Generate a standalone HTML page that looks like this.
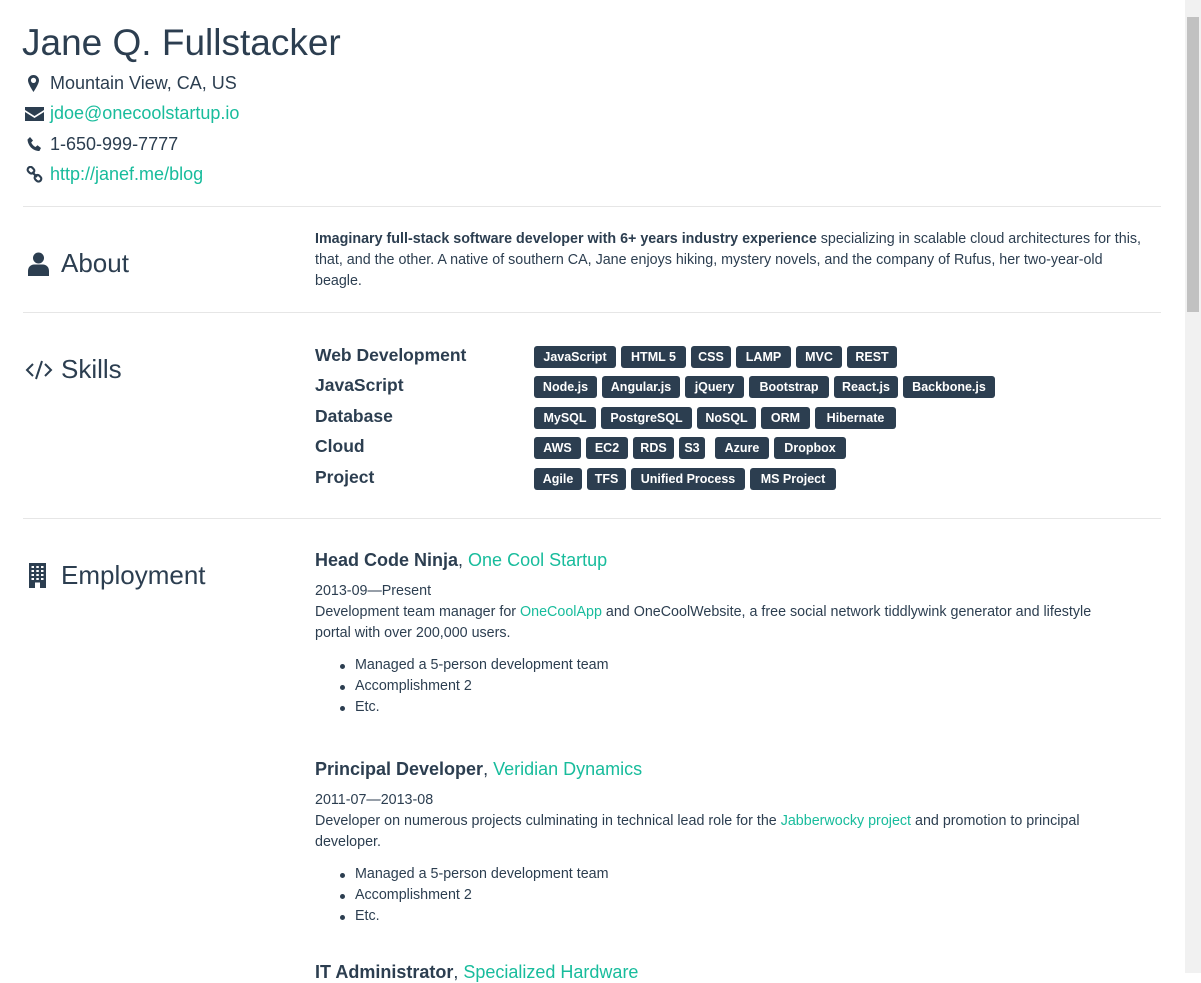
<!DOCTYPE html>
<html><head><meta charset="utf-8">
<style>
html,body{margin:0;padding:0;background:#fff;}
body{font-family:"Liberation Sans",sans-serif;color:#2c3e50;width:1201px;height:973px;overflow:hidden;position:relative;}
a{color:#18bc9c;text-decoration:none;}
.abs{position:absolute;white-space:nowrap;}
.sb{position:absolute;left:1185px;top:0;width:16px;height:973px;background:#f1f1f1;}
.sb .th{position:absolute;left:2px;top:17px;width:12px;height:295px;background:#c1c1c1;}
hr{position:absolute;left:23px;width:1138px;margin:0;border:0;border-top:1px solid #e6e6e6;}
.h1{font-size:37px;left:22px;top:22px;}
.ci{font-size:18px;left:50px;}
.ic{position:absolute;left:25px;}
.sh{font-size:26px;left:61px;}
.p{font-size:14.3px;line-height:21px;left:315px;width:830px;white-space:normal;}
.lab{font-size:17.5px;font-weight:bold;left:315px;}
.tags{position:absolute;left:534px;height:22px;font-size:0;white-space:nowrap;}
.t{display:inline-block;height:22px;line-height:22px;background:#2c3e50;color:#fff;font-size:12.5px;font-weight:bold;text-align:center;border-radius:3px;margin-right:5px;}
.jh{font-size:18px;left:315px;}
ul{margin:0;padding:0;list-style:none;}
li{position:relative;font-size:14.3px;line-height:21px;}
li:before{content:"";position:absolute;left:-15px;top:9px;width:5px;height:5px;border-radius:50%;background:#2c3e50;}
</style></head><body>
<div class="abs h1">Jane Q. Fullstacker</div>

<svg class="ic" style="top:75px;left:28px" width="11" height="17" viewBox="0 0 11 17"><path d="M5.5 0C2.5 0 0 2.4 0 5.4 0 9 5.5 17 5.5 17S11 9 11 5.4C11 2.4 8.5 0 5.5 0zm0 8a2.6 2.6 0 1 1 0-5.2 2.6 2.6 0 0 1 0 5.2z" fill="#2c3e50"/></svg>
<div class="abs ci" style="top:73px">Mountain View, CA, US</div>

<svg class="ic" style="top:107px" width="19" height="14" viewBox="0 0 19 14"><path d="M0 0h19v3l-9.5 6L0 3z M0 5l9.5 6 9.5-6v9H0z" fill="#2c3e50"/></svg>
<div class="abs ci" style="top:103px"><a>jdoe@onecoolstartup.io</a></div>

<svg class="ic" style="top:137px;left:27px" width="15" height="15" viewBox="0 0 15 15"><path d="M3 0l3 3.5-1.8 2c.8 2 2.4 3.6 4.3 4.5l2-1.8L14 11l-1.6 3C6 14 1 9 0.5 2.5z" fill="#2c3e50"/></svg>
<div class="abs ci" style="top:134px">1-650-999-7777</div>

<svg class="ic" style="top:166px;left:26px" width="17" height="17" viewBox="0 0 17 17"><g fill="none" stroke="#2c3e50" stroke-width="2.2"><rect x="1.5" y="1.5" width="7" height="5.5" rx="2.7" transform="rotate(45 5 4.2)"/><rect x="8.5" y="9.5" width="7" height="5.5" rx="2.7" transform="rotate(45 12 12.2)"/><path d="M6 6l5 5"/></g></svg>
<div class="abs ci" style="top:164px"><a>http://janef.me/blog</a></div>

<hr style="top:206px">

<svg class="ic" style="top:252px;left:28px" width="21" height="24" viewBox="0 0 21 24"><circle cx="10.5" cy="6" r="5.5" fill="#2c3e50"/><path d="M0 24v-5c0-4 3-6.5 6-6.5h9c3 0 6 2.5 6 6.5v5z" fill="#2c3e50"/></svg>
<div class="abs sh" style="top:248px">About</div>
<div class="abs p" style="top:229px"><b>Imaginary full-stack software developer with 6+ years industry experience</b> specializing in scalable cloud architectures for this, that, and the other. A native of southern CA, Jane enjoys hiking, mystery novels, and the company of Rufus, her two-year-old beagle.</div>

<hr style="top:312px">

<svg class="ic" style="top:359px" width="28" height="22" viewBox="0 0 28 22"><g fill="none" stroke="#2c3e50" stroke-width="2"><path d="M8 5l-6 6 6 6M20 5l6 6-6 6M17 2l-6 18"/></g></svg>
<div class="abs sh" style="top:354px">Skills</div>

<div class="abs lab" style="top:345px">Web Development</div>
<div class="abs lab" style="top:375px">JavaScript</div>
<div class="abs lab" style="top:406px">Database</div>
<div class="abs lab" style="top:436px">Cloud</div>
<div class="abs lab" style="top:467px">Project</div>

<div class="tags" style="top:346px"><span class="t" style="width:82px">JavaScript</span><span class="t" style="width:65px">HTML 5</span><span class="t" style="width:40px">CSS</span><span class="t" style="width:55px">LAMP</span><span class="t" style="width:46px">MVC</span><span class="t" style="width:50px">REST</span></div>
<div class="tags" style="top:376px"><span class="t" style="width:63px">Node.js</span><span class="t" style="width:78px">Angular.js</span><span class="t" style="width:59px">jQuery</span><span class="t" style="width:80px">Bootstrap</span><span class="t" style="width:64px">React.js</span><span class="t" style="width:92px">Backbone.js</span></div>
<div class="tags" style="top:407px"><span class="t" style="width:62px">MySQL</span><span class="t" style="width:91px">PostgreSQL</span><span class="t" style="width:59px">NoSQL</span><span class="t" style="width:49px">ORM</span><span class="t" style="width:81px">Hibernate</span></div>
<div class="tags" style="top:437px"><span class="t" style="width:47px">AWS</span><span class="t" style="width:42px">EC2</span><span class="t" style="width:41px">RDS</span><span class="t" style="width:26px">S3</span><span class="t" style="width:54px;margin-left:5px">Azure</span><span class="t" style="width:72px">Dropbox</span></div>
<div class="tags" style="top:468px"><span class="t" style="width:48px">Agile</span><span class="t" style="width:39px">TFS</span><span class="t" style="width:114px">Unified Process</span><span class="t" style="width:86px">MS Project</span></div>

<hr style="top:518px">

<svg class="ic" style="top:563px;left:28px" width="19" height="25" viewBox="0 0 19 25"><rect x="1" y="0" width="17" height="25" fill="#2c3e50"/><g fill="#fff"><rect x="3.5" y="3" width="2.5" height="2"/><rect x="8.3" y="3" width="2.5" height="2"/><rect x="13" y="3" width="2.5" height="2"/><rect x="3.5" y="7" width="2.5" height="2"/><rect x="8.3" y="7" width="2.5" height="2"/><rect x="13" y="7" width="2.5" height="2"/><rect x="3.5" y="11" width="2.5" height="2"/><rect x="8.3" y="11" width="2.5" height="2"/><rect x="13" y="11" width="2.5" height="2"/><rect x="3.5" y="15" width="2.5" height="2"/><rect x="8.3" y="15" width="2.5" height="2"/><rect x="13" y="15" width="2.5" height="2"/><rect x="7" y="19.5" width="5" height="5.5"/></g></svg>
<div class="abs sh" style="top:560px">Employment</div>

<div class="abs jh" style="top:550px"><b>Head Code Ninja</b>, <a>One Cool Startup</a></div>
<div class="abs p" style="top:581px;width:805px">2013-09—Present<br>Development team manager for <a>OneCoolApp</a> and OneCoolWebsite, a free social network tiddlywink generator and lifestyle portal with over 200,000 users.</div>
<div class="abs" style="left:355px;top:655px"><ul><li>Managed a 5-person development team</li><li>Accomplishment 2</li><li>Etc.</li></ul></div>

<div class="abs jh" style="top:759px"><b>Principal Developer</b>, <a>Veridian Dynamics</a></div>
<div class="abs p" style="top:790px">2011-07—2013-08<br>Developer on numerous projects culminating in technical lead role for the <a>Jabberwocky project</a> and promotion to principal developer.</div>
<div class="abs" style="left:355px;top:864px"><ul><li>Managed a 5-person development team</li><li>Accomplishment 2</li><li>Etc.</li></ul></div>

<div class="abs jh" style="top:962px"><b>IT Administrator</b>, <a>Specialized Hardware</a></div>

<div class="sb"><div class="th"></div></div>
</body></html>
